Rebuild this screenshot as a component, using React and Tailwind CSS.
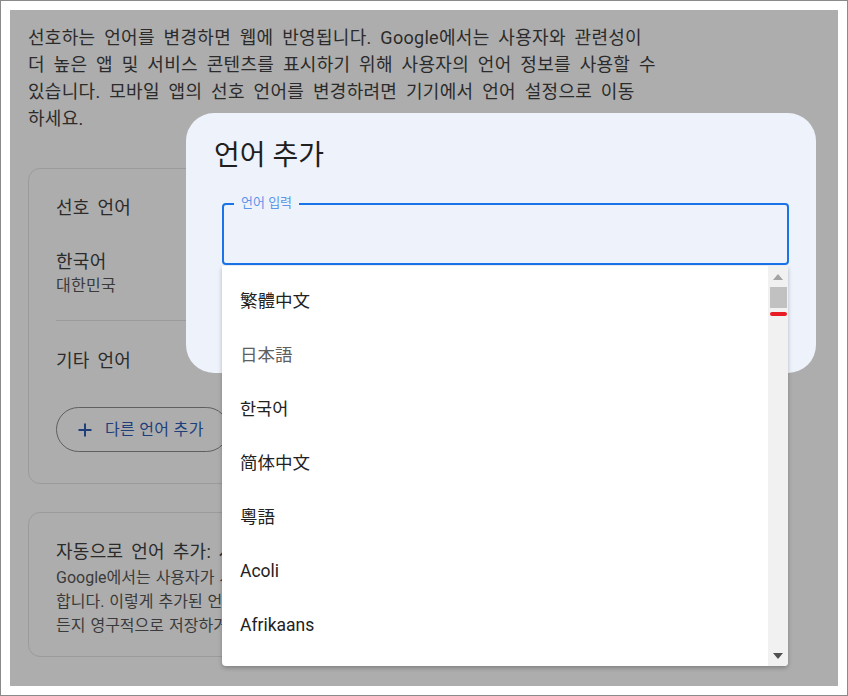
export default function App() {
  const font = { fontFamily: 'Roboto, "Noto Sans CJK KR", "Noto Sans", sans-serif' };
  const langs = ['繁體中文', '日本語', '한국어', '简体中文', '粵語', 'Acoli', 'Afrikaans'];

  return (
    <div className="relative w-[848px] h-[696px] overflow-hidden border border-[#8a8a8a] bg-white p-[9px]" style={font}>
      {/* page behind the dialog */}
      <div className="h-full bg-[#adadad] px-[18px] pt-[14px] text-[#2b2b2b] tracking-[0.3px] [word-spacing:3px]">
        <p className="text-[18px] leading-[27px] [word-spacing:4px]">
          <span className="block">선호하는 언어를 변경하면 웹에 반영됩니다. Google에서는 사용자와 관련성이</span>
          <span className="block">더 높은 앱 및 서비스 콘텐츠를 표시하기 위해 사용자의 언어 정보를 사용할 수</span>
          <span className="block">있습니다. 모바일 앱의 선호 언어를 변경하려면 기기에서 언어 설정으로 이동</span>
          <span className="block">하세요.</span>
        </p>

        <div className="mt-[36px] w-[700px] rounded-[12px] border border-[#9b9b9b] px-[27px] pt-[27px] pb-[31px]">
          <div className="text-[18px] leading-[24px]">선호 언어</div>
          <div className="mt-[30px] text-[18px] leading-[24px]">한국어</div>
          <div className="mt-[1px] text-[16px] leading-[22px] text-[#3a3a3a]">대한민국</div>
          <div className="mt-[23px] h-px bg-[#9b9b9b]"></div>
          <div className="mt-[28px] text-[18px] leading-[24px]">기타 언어</div>
          <button className="mt-[34px] flex h-[45px] items-center gap-[12px] rounded-full border border-[#5f5f5f] pl-[20px] pr-[24px] text-[16px] text-[#1e3f7c]">
            <svg width="16" height="16" viewBox="0 0 16 16" fill="none">
              <path d="M8 1.5V14.5M1.5 8H14.5" stroke="#1e3f7c" strokeWidth="2" />
            </svg>
            다른 언어 추가
          </button>
        </div>

        <div className="mt-[28px] w-[700px] rounded-[12px] border border-[#9b9b9b] px-[27px] pt-[27px] pb-[18px]">
          <div className="text-[18px] leading-[24px]">자동으로 언어 추가: 사용 중</div>
          <div className="mt-[2px] text-[16px] leading-[24px] text-[#3a3a3a] tracking-normal [word-spacing:1px]">
            <span className="block">Google에서는 사용자가 사용하는 언어를 자동으로 추가하여 더 많은 콘텐츠를</span>
            <span className="block">합니다. 이렇게 추가된 언어는 계정에 표시되며 언제든지 삭제할 수 있습니다.</span>
            <span className="block">든지 영구적으로 저장하거나 삭제할 수 있습니다.</span>
          </div>
        </div>
      </div>

      {/* dialog */}
      <div className="absolute left-[185px] top-[112px] h-[260px] w-[630px] rounded-[28px] bg-[#eef2fb] pl-[28px] pt-[25px]">
        <h2 className="text-[28px] leading-[36px] text-[#1f1f1f]">언어 추가</h2>
        <div className="relative mt-[29px] ml-[8px] h-[62px] w-[567px] rounded-[4px] border-2 border-[#1b73e8]">
          <span className="absolute left-[10px] top-[-10px] bg-[#eef2fb] px-[7px] text-[13px] leading-[16px] text-[#5d95ea]">
            언어 입력
          </span>
        </div>
      </div>

      {/* listbox */}
      <div className="absolute left-[221px] top-[265px] flex h-[400px] w-[566px] overflow-hidden rounded-b-[4px] bg-white shadow-[0_2px_4px_rgba(0,0,0,0.25)]">
        <ul className="flex-1 pt-[8px]">
          {langs.map((l) => (
            <li
              key={l}
              className={`flex h-[54px] items-center pl-[18px] text-[17.5px] ${l === '日本語' ? 'text-[#606060]' : 'text-[#222]'}`}
            >
              {l}
            </li>
          ))}
        </ul>
        <div className="flex w-[20px] flex-col items-center bg-[#f1f1f1] pt-[8px] pb-[7px]">
          <svg width="10" height="6" viewBox="0 0 10 6">
            <path d="M0 6L5 0L10 6Z" fill="#a3a3a3" />
          </svg>
          <div className="mt-[7px] h-[21px] w-[17px] bg-[#c1c1c1]"></div>
          <div className="mt-[4px] h-[4px] w-[17px] rounded-full bg-[#e81c24]"></div>
          <div className="flex-1"></div>
          <svg width="10" height="6" viewBox="0 0 10 6">
            <path d="M0 0L10 0L5 6Z" fill="#505050" />
          </svg>
        </div>
      </div>
    </div>
  );
}
